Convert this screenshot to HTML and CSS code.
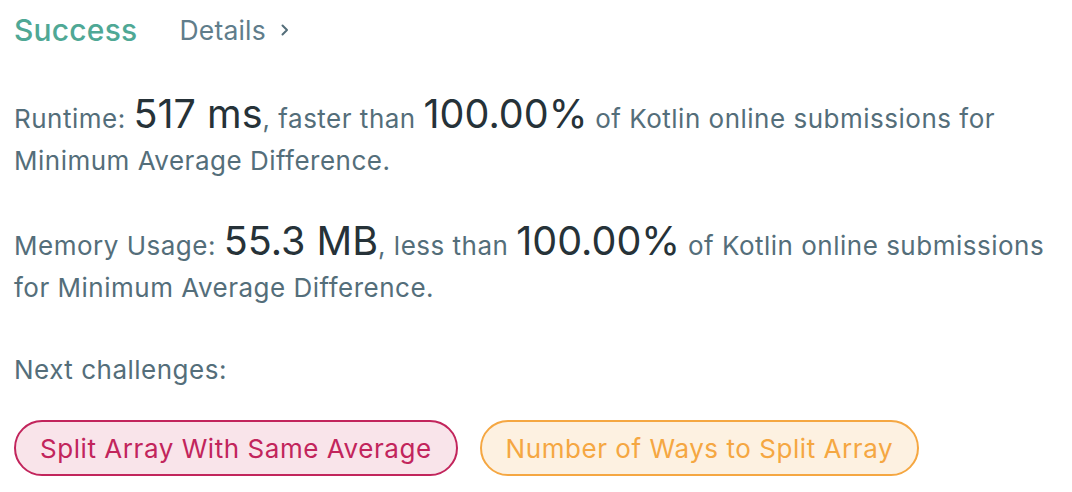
FILE: index.html
```html
<!DOCTYPE html>
<html>
<head>
<meta charset="utf-8">
<link rel="stylesheet" href="styles.css">
</head>
<body>
<div class="page">
  <div class="header">
    <span class="status">Success</span>
    <a class="details">Details <span class="chev">
      <svg width="10" height="14" viewBox="0 0 10 14"><path d="M2.5 2.5 L7 7 L2.5 11.5" fill="none" stroke="currentColor" stroke-width="2" stroke-linecap="round" stroke-linejoin="round"/></svg>
    </span></a>
  </div>
  <p class="stat first">Runtime: <span class="big">517 ms</span>, faster than <span class="big">100.00%</span> of Kotlin online submissions for Minimum Average Difference.</p>
  <p class="stat">Memory Usage: <span class="big">55.3 MB</span>, less than <span class="big">100.00%</span> of Kotlin online submissions for Minimum Average Difference.</p>
  <p class="next">Next challenges:</p>
  <div class="pills">
    <a class="pill hard">Split Array With Same Average</a>
    <a class="pill medium">Number of Ways to Split Array</a>
  </div>
</div>
</body>
</html>
```
FILE: styles.css
```css
html, body {
  margin: 0;
  padding: 0;
  background: #ffffff;
}
.page {
  font-family: Inter, "Noto Sans", sans-serif;
  color: #546e7a;
  padding: 9px 14px 0 14px;
  width: 1040px;
}
.header {
  display: flex;
  align-items: center;
  gap: 42px;
  height: 42px;
}
.status {
  font-size: 30px;
  letter-spacing: 0.2px;
  color: #4fa895;
  font-weight: 500;
}
.details {
  font-size: 26.5px;
  letter-spacing: 0.2px;
  color: #607d8b;
  display: flex;
  align-items: center;
  gap: 14px;
}
.chev {
  display: flex;
  color: #546e7a;
}
.stat, .next {
  font-size: 26px;
  letter-spacing: 0.5px;
  line-height: 42px;
  margin: 38px 0 0 0;
}
.stat.first {
  margin-top: 42px;
}
.next {
  margin-top: 40px;
}
.big {
  font-size: 39.5px;
  letter-spacing: 0;
  color: #263238;
}
.pills {
  display: flex;
  gap: 22px;
  margin-top: 29px;
}
.pill {
  font-size: 26px;
  letter-spacing: 0.55px;
  height: 52px;
  padding: 0 24px;
  border-radius: 28px;
  border: 2px solid;
  display: flex;
  align-items: center;
}
.pill.hard {
  color: #c2255c;
  background: #f9e4ea;
  border-color: #c2255c;
}
.pill.medium {
  color: #f5a742;
  background: #fdf1e1;
  border-color: #f5a742;
}
```
